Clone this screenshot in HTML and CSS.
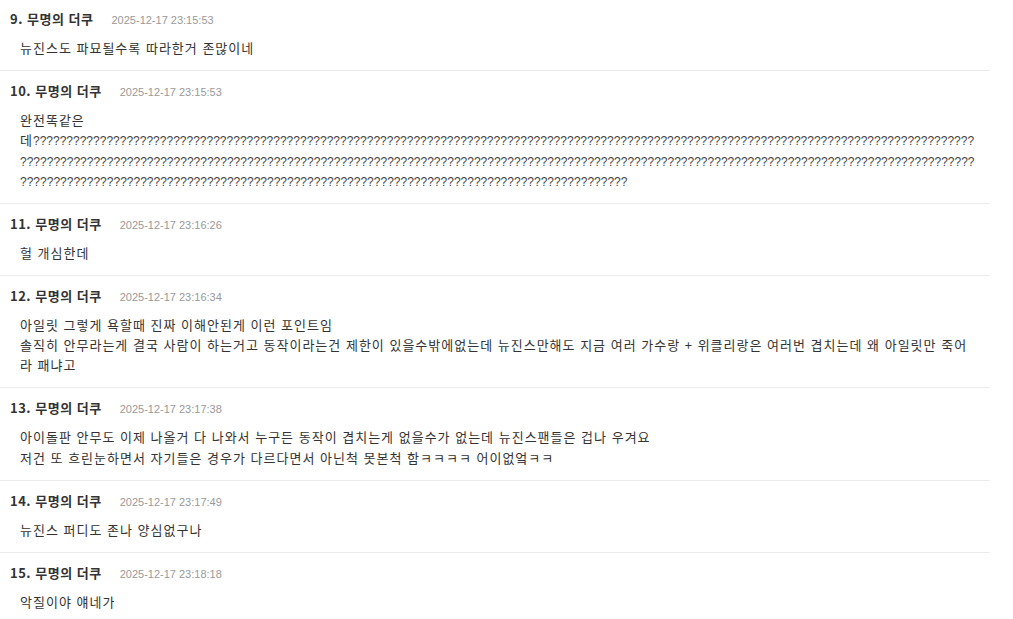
FILE: index.html
```html
<!DOCTYPE html>
<html lang="ko">
<head>
<meta charset="utf-8">
<link rel="stylesheet" href="styles.css">
</head>
<body>
<div class="list">
  <div class="entry">
    <div class="head"><span class="name">9. 무명의 더쿠</span><span class="date">2025-12-17 23:15:53</span></div>
    <div class="body">뉴진스도 파묘될수록 따라한거 존많이네</div>
  </div>
  <div class="entry">
    <div class="head"><span class="name">10. 무명의 더쿠</span><span class="date">2025-12-17 23:15:53</span></div>
    <div class="body">완전똑같은데<span class="q">??????????<!--
    -->??????????<!--
    -->??????????<!--
    -->??????????<!--
    -->??????????<!--
    -->??????????<!--
    -->??????????<!--
    -->??????????<!--
    -->??????????<!--
    -->??????????<!--
    -->??????????<!--
    -->??????????<!--
    -->??????????<!--
    -->??????????<!--
    -->??<!--
    -->??????????<!--
    -->??????????<!--
    -->??????????<!--
    -->??????????<!--
    -->??????????<!--
    -->??????????<!--
    -->??????????<!--
    -->??????????<!--
    -->??????????<!--
    -->??????????<!--
    -->??????????<!--
    -->??????????<!--
    -->??????????<!--
    -->??????????<!--
    -->???<!--
    -->??????????<!--
    -->??????????<!--
    -->??????????<!--
    -->??????????<!--
    -->??????????<!--
    -->??????????<!--
    -->??????????<!--
    -->??????????<!--
    -->??????????</span></div>
  </div>
  <div class="entry">
    <div class="head"><span class="name">11. 무명의 더쿠</span><span class="date">2025-12-17 23:16:26</span></div>
    <div class="body">헐 개심한데</div>
  </div>
  <div class="entry">
    <div class="head"><span class="name">12. 무명의 더쿠</span><span class="date">2025-12-17 23:16:34</span></div>
    <div class="body">아일릿 그렇게 욕할때 진짜 이해안된게 이런 포인트임<br>솔직히 안무라는게 결국 사람이 하는거고 동작이라는건 제한이 있을수밖에없는데 뉴진스만해도 지금 여러 가수랑 + 위클리랑은 여러번 겹치는데 왜 아일릿만 죽어라 패냐고</div>
  </div>
  <div class="entry">
    <div class="head"><span class="name">13. 무명의 더쿠</span><span class="date">2025-12-17 23:17:38</span></div>
    <div class="body">아이돌판 안무도 이제 나올거 다 나와서 누구든 동작이 겹치는게 없을수가 없는데 뉴진스팬들은 겁나 우겨요<br>저건 또 흐린눈하면서 자기들은 경우가 다르다면서 아닌척 못본척 함ㅋㅋㅋㅋ 어이없엌ㅋㅋ</div>
  </div>
  <div class="entry">
    <div class="head"><span class="name">14. 무명의 더쿠</span><span class="date">2025-12-17 23:17:49</span></div>
    <div class="body">뉴진스 퍼디도 존나 양심없구나</div>
  </div>
  <div class="entry">
    <div class="head"><span class="name">15. 무명의 더쿠</span><span class="date">2025-12-17 23:18:18</span></div>
    <div class="body">악질이야 얘네가</div>
  </div>
</div>
</body>
</html>
```

FILE: styles.css
```css
html, body {
  margin: 0;
  padding: 0;
  background: #fff;
}
body {
  font-family: "Noto Sans CJK KR", "Liberation Sans", sans-serif;
  color: #333;
  overflow: hidden;
}
.list {
  width: 990px;
  margin-top: -1px;
}
.entry {
  padding: 10px 10px 11.7px;
  border-bottom: 1px solid #eaeaea;
}
.head {
  display: flex;
  align-items: baseline;
  line-height: 20px;
  height: 20px;
}
.name {
  font-size: 13px;
  font-weight: bold;
  letter-spacing: 0.5px;
  color: #333;
}
.date {
  font-family: "Liberation Sans", sans-serif;
  font-size: 11px;
  color: #999;
  margin-left: 18px;
}
.body {
  margin-top: 9px;
  padding-left: 10px;
  font-size: 13px;
  line-height: 20.3px;
  letter-spacing: 1px;
  color: #333;
  overflow-wrap: break-word;
}
.q {
  font-family: "Liberation Sans", sans-serif;
  font-size: 12px;
  line-height: 14px;
  letter-spacing: 0;
  color: #444;
}
```
